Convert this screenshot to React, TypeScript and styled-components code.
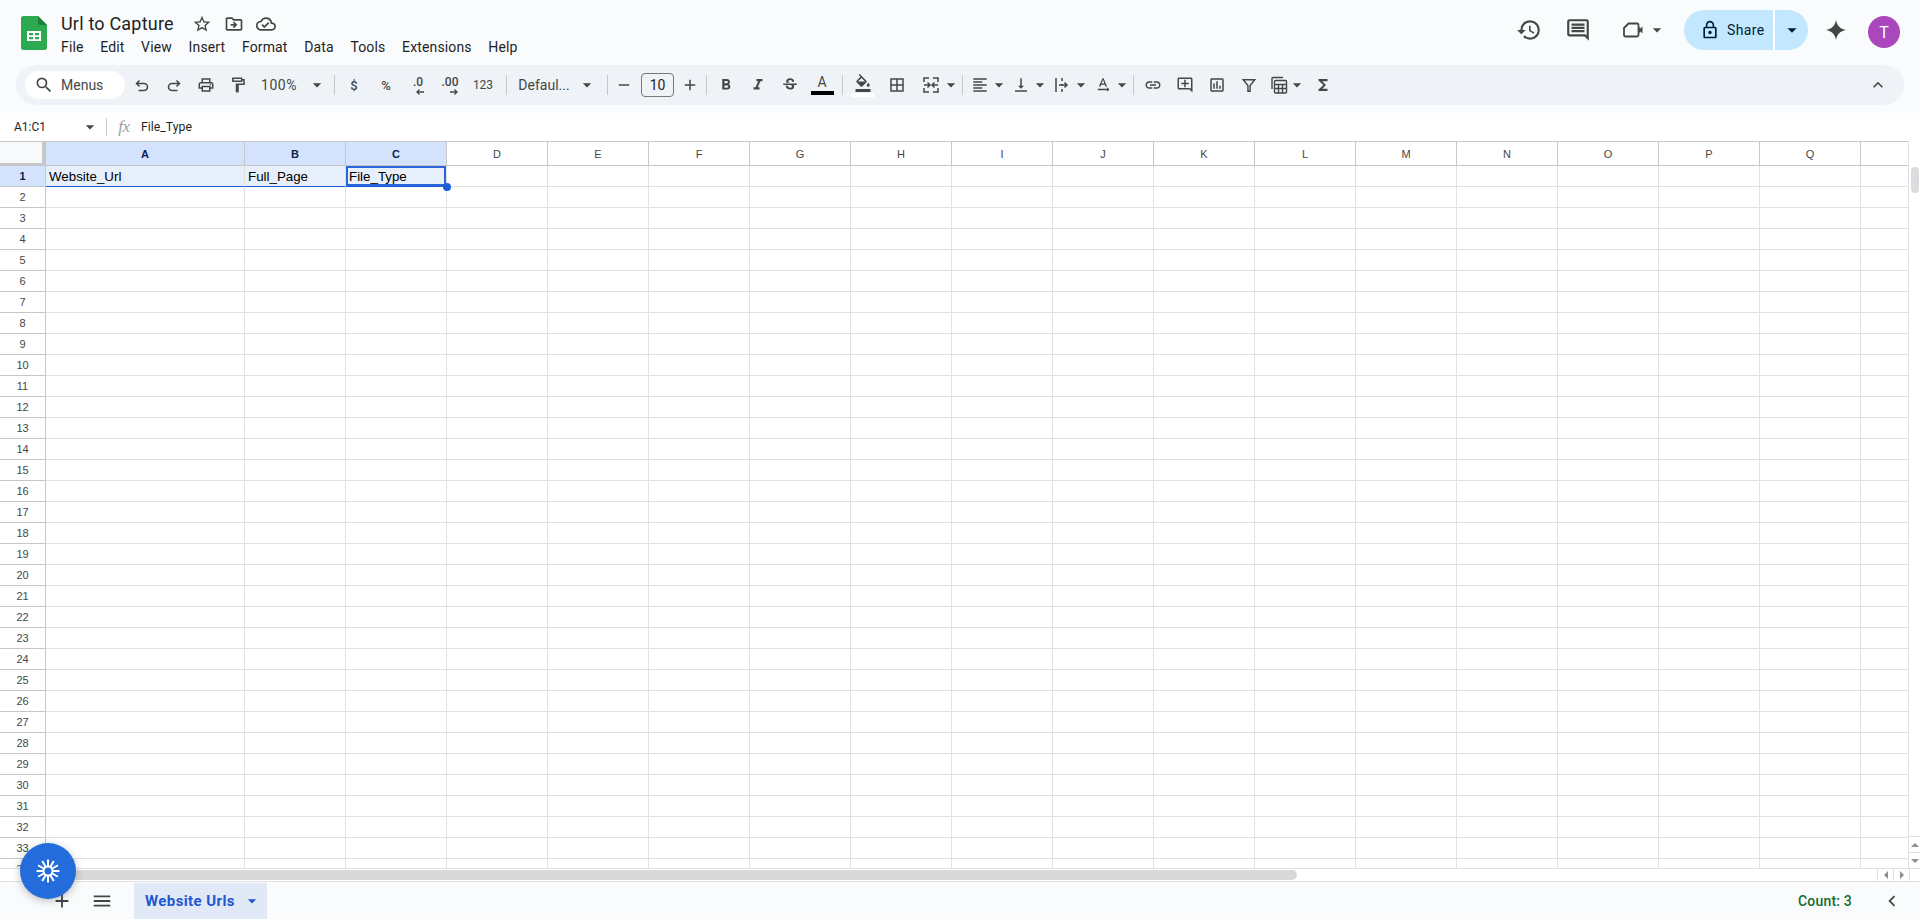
import React from "react"
import styled, { createGlobalStyle } from "styled-components"
import {
  MdAdd,
  MdArrowDropDown,
  MdChevronLeft,
  MdFormatBold,
  MdFormatItalic,
  MdFormatAlignLeft,
  MdFunctions,
  MdHistory,
  MdKeyboardArrowUp,
  MdLink,
  MdLockOutline,
  MdMenu,
  MdOutlineAddComment,
  MdOutlineBorderAll,
  MdOutlineCloudDone,
  MdOutlineComment,
  MdOutlineDriveFileMove,
  MdOutlineFormatColorFill,
  MdOutlineFormatPaint,
  MdOutlineInsertChart,
  MdOutlinePrint,
  MdRemove,
  MdSearch,
  MdStarBorder,
  MdStrikethroughS,
  MdTextRotationNone,
  MdVerticalAlignBottom,
} from "react-icons/md"

const GlobalStyle = createGlobalStyle`
  html, body {
    margin: 0;
    height: 100%;
    overflow: hidden;
    background: #fff;
    font-family: Roboto, "Liberation Sans", sans-serif;
  }
  * { box-sizing: border-box; }
`

const Page = styled.div`
  position: relative;
  display: flex;
  flex-direction: column;
  height: 919px;
  overflow: hidden;
`

const Header = styled.header`
  height: 113px;
  background: #f9fbfd;
  display: flex;
  flex-direction: column;
  flex: none;
`

const TopRow = styled.div`
  height: 65px;
  display: flex;
  padding-left: 21px;
`

const Logo = styled.svg`
  width: 26px;
  height: 34px;
  margin-top: 16px;
  flex: none;
`

const TitleBlock = styled.div`
  margin-left: 6px;
  padding-top: 11px;
  flex: 1;
`

const TitleRow = styled.div`
  display: flex;
  align-items: center;
  height: 24px;
  padding-left: 8px;
`

const Title = styled.div`
  font-size: 18px;
  letter-spacing: 0.2px;
  color: #1f1f1f;
  width: 125px;
  white-space: nowrap;
`

const TitleIcon = styled.span`
  width: 32px;
  display: flex;
  justify-content: center;
  color: #444746;
  font-size: 20px;
  padding-top: 2px;
`

const MenuRow = styled.nav`
  display: flex;
  margin-top: 1px;
  height: 22px;
  align-items: center;
`

const MenuItem = styled.span`
  padding: 0 8.6px 0 8px;
  font-size: 14px;
  color: #1f1f1f;
  letter-spacing: 0.15px;
`

const RightGroup = styled.div`
  display: flex;
  align-items: center;
  height: 40px;
  margin-top: 10px;
  padding-right: 20px;
  color: #444746;
`

const HeadIcon = styled.span<{ $w: number; $ml?: number; $size?: number }>`
  width: ${(p) => p.$w}px;
  margin-left: ${(p) => p.$ml ?? 0}px;
  display: flex;
  align-items: center;
  justify-content: center;
  font-size: ${(p) => p.$size ?? 24}px;
`

const Caret = styled(MdArrowDropDown)`
  font-size: 20px;
  flex: none;
`

const ShareButton = styled.div`
  display: flex;
  height: 40px;
  margin-left: 17px;
  border-radius: 20px;
  background: #c2e7ff;
  color: #001d35;
  overflow: hidden;
`

const ShareMain = styled.div`
  width: 91px;
  display: flex;
  align-items: center;
  padding-left: 16px;
  gap: 7px;
  font-size: 14px;
  font-weight: 400;
  letter-spacing: 0.4px;
  border-right: 2px solid #fff;
  svg { font-size: 20px; }
`

const ShareCaret = styled.div`
  width: 33px;
  display: flex;
  align-items: center;
  justify-content: center;
  svg { font-size: 22px; }
`

const Avatar = styled.div`
  width: 32px;
  height: 32px;
  border-radius: 50%;
  background: #ab47bc;
  color: #fff;
  font-size: 16px;
  margin-left: 4px;
  margin-top: 4px;
  display: flex;
  align-items: center;
  justify-content: center;
`

const Toolbar = styled.div`
  height: 40px;
  margin: 0 16px;
  padding-left: 9px;
  border-radius: 20px;
  background: #eff3f8;
  display: flex;
  align-items: center;
  color: #444746;
`

const SearchPill = styled.div`
  width: 100px;
  height: 28px;
  border-radius: 14px;
  background: #fff;
  display: flex;
  align-items: center;
  padding-left: 9px;
  gap: 7px;
  font-size: 14px;
  color: #444746;
  margin-right: 1px;
  svg { font-size: 20px; }
`

const ToolButton = styled.span<{ $w?: number; $size?: number }>`
  width: ${(p) => p.$w ?? 32}px;
  height: 28px;
  flex: none;
  display: flex;
  align-items: center;
  justify-content: center;
  position: relative;
  font-size: ${(p) => p.$size ?? 18}px;
  color: #444746;
`

const CaretButton = styled(ToolButton)`
  padding-right: 4px;
`

const ToolText = styled.span<{ $size?: number; $bold?: boolean; $track?: number }>`
  font-size: ${(p) => p.$size ?? 14}px;
  font-weight: ${(p) => (p.$bold ? 500 : 400)};
  letter-spacing: ${(p) => p.$track ?? 0}px;
  white-space: nowrap;
`

const ToolSep = styled.span<{ $ml?: number; $mr?: number }>`
  width: 1px;
  height: 20px;
  flex: none;
  background: #c7c7c7;
  margin-left: ${(p) => p.$ml ?? 0}px;
  margin-right: ${(p) => p.$mr ?? 0}px;
`

const SizeInput = styled.span`
  width: 33px;
  height: 24px;
  border: 1px solid #747775;
  border-radius: 4px;
  flex: none;
  display: flex;
  align-items: center;
  justify-content: center;
  font-size: 14px;
  color: #1f1f1f;
  margin: 0 4px 0 5px;
`

const ColorStack = styled.span`
  display: flex;
  flex-direction: column;
  align-items: center;
  width: 23px;
`

const ColorBar = styled.span<{ $color: string }>`
  width: 23px;
  height: 4px;
  background: ${(p) => p.$color};
  margin-top: 1px;
`

const LetterA = styled.span`
  font-size: 14px;
  line-height: 15px;
  color: #444746;
`

const DecimalLabel = styled.span`
  font-size: 12px;
  font-weight: 500;
  margin-top: -7px;
`

const DecimalArrow = styled.svg<{ $right?: boolean }>`
  position: absolute;
  width: 10px;
  height: 8px;
  bottom: 3px;
  left: ${(p) => (p.$right ? 15 : 13)}px;
`

const CollapseButton = styled.span`
  margin-left: auto;
  margin-right: 16px;
  font-size: 20px;
  display: flex;
  color: #444746;
`

const FormulaBar = styled.div`
  height: 28px;
  flex: none;
  background: #fff;
  display: flex;
  align-items: center;
  color: #1f1f1f;
`

const NameBox = styled.div`
  width: 106px;
  padding-left: 14px;
  display: flex;
  align-items: center;
  justify-content: space-between;
  padding-right: 6px;
  font-size: 12px;
  color: #1f1f1f;
  svg { font-size: 20px; color: #444746; }
`

const FormulaSep = styled.span`
  width: 1px;
  height: 18px;
  background: #c7c7c7;
`

const Fx = styled.span`
  font-family: "Liberation Serif", serif;
  font-style: italic;
  font-size: 17px;
  color: #9aa0a6;
  width: 34px;
  text-align: center;
  letter-spacing: -0.5px;
`

const FormulaText = styled.span`
  font-size: 12.3px;
  color: #1f1f1f;
`

const SheetArea = styled.div`
  flex: 1;
  min-height: 0;
  display: flex;
`

const GridClip = styled.div`
  flex: 1;
  overflow: hidden;
  border-bottom: 1px solid #e1e1e1;
  position: relative;
`

const Grid = styled.div`
  display: grid;
  grid-template-columns: 46px 199px repeat(16, 101px) 60px;
  grid-template-rows: 25px;
  grid-auto-rows: 21px;
  font-family: "Liberation Sans", Arial, sans-serif;
`

const Corner = styled.div`
  background: #f8f9fa;
  border-top: 1px solid #c7c7c7;
  border-right: 4px solid #c7c7c7;
  border-bottom: 3px solid #c7c7c7;
`

const ColHead = styled.div<{ $active?: boolean }>`
  border-top: 1px solid #c7c7c7;
  border-right: 1px solid #c7c7c7;
  border-bottom: 1px solid #c7c7c7;
  background: ${(p) => (p.$active ? "#d3e3fd" : "#fff")};
  color: ${(p) => (p.$active ? "#0b1f4e" : "#444746")};
  font-size: 11px;
  font-weight: ${(p) => (p.$active ? 700 : 400)};
  display: flex;
  align-items: center;
  justify-content: center;
`

const RowHead = styled.div<{ $active?: boolean }>`
  border-right: 1px solid #c7c7c7;
  border-bottom: 1px solid #c7c7c7;
  background: ${(p) => (p.$active ? "#d3e3fd" : "#fff")};
  color: ${(p) => (p.$active ? "#0b1f4e" : "#444746")};
  font-size: 11px;
  font-weight: ${(p) => (p.$active ? 700 : 400)};
  display: flex;
  align-items: center;
  justify-content: center;
`

const Cell = styled.div<{ $selected?: boolean; $current?: boolean }>`
  position: relative;
  border-right: 1px solid #e1e1e1;
  border-bottom: 1px solid ${(p) => (p.$selected ? "#1a5fd8" : "#e1e1e1")};
  background: ${(p) => (p.$selected ? "#e7effb" : "#fff")};
  box-shadow: ${(p) => (p.$current ? "inset 0 0 0 2px #2a66d9" : "none")};
  padding: 2px 3px 0 3px;
  font-size: 13.33px;
  line-height: 17px;
  color: #000;
  white-space: nowrap;
  overflow: visible;
`

const FillHandle = styled.span`
  position: absolute;
  right: -5px;
  bottom: -5px;
  width: 8px;
  height: 8px;
  border-radius: 50%;
  background: #1a5fd8;
  z-index: 2;
`

const VScroll = styled.div`
  width: 12px;
  flex: none;
  border-left: 1px solid #e1e1e1;
  border-bottom: 1px solid #e1e1e1;
  display: flex;
  flex-direction: column;
  align-items: center;
`

const VThumb = styled.div`
  width: 8px;
  height: 26px;
  margin-top: 26px;
  border-radius: 4px;
  background: #dadce0;
`

const ScrollArrow = styled.span<{ $dir: "up" | "down" | "left" | "right" }>`
  width: 0;
  height: 0;
  border-style: solid;
  ${(p) =>
    p.$dir === "up" || p.$dir === "down"
      ? `border-width: ${p.$dir === "up" ? "0 4px 4px 4px" : "4px 4px 0 4px"};
         border-color: ${p.$dir === "up" ? "transparent transparent #8f8f8f" : "#8f8f8f transparent transparent"};`
      : `border-width: ${p.$dir === "left" ? "4px 4px 4px 0" : "4px 0 4px 4px"};
         border-color: ${p.$dir === "left" ? "transparent #8f8f8f transparent transparent" : "transparent transparent transparent #8f8f8f"};`}
`

const VArrowBox = styled.div<{ $first?: boolean }>`
  width: 100%;
  height: 16px;
  display: flex;
  align-items: center;
  justify-content: center;
  border-top: 1px solid #e1e1e1;
  margin-top: ${(p) => (p.$first ? "auto" : "0")};
`

const HScroll = styled.div`
  height: 13px;
  flex: none;
  display: flex;
  align-items: center;
  padding-left: 46px;
  border-bottom: 1px solid #e1e1e1;
`

const HThumb = styled.div`
  width: 1251px;
  height: 10px;
  border-radius: 5px;
  background: #d9d9d9;
`

const HArrowBox = styled.div<{ $first?: boolean }>`
  width: 16px;
  height: 100%;
  display: flex;
  align-items: center;
  justify-content: center;
  border-left: 1px solid #e1e1e1;
  margin-left: ${(p) => (p.$first ? "auto" : "0")};
`

const HEnd = styled.div`
  width: 11px;
  height: 100%;
  border-left: 1px solid #e1e1e1;
`

const BottomBar = styled.footer`
  height: 37px;
  flex: none;
  background: #f9fbfd;
  display: flex;
  align-items: center;
  padding-left: 46px;
  color: #444746;
`

const BottomIcon = styled.span`
  width: 32px;
  margin-right: 8px;
  display: flex;
  justify-content: center;
  font-size: 22px;
`

const SheetTab = styled.div`
  height: 36px;
  width: 133px;
  margin-top: 1px;
  margin-left: 8px;
  background: #e1e9f7;
  display: flex;
  align-items: center;
  padding-left: 11px;
  font-size: 15px;
  font-weight: 700;
  letter-spacing: 0.4px;
  color: #1f57d3;
  gap: 7px;
  white-space: nowrap;
  svg { font-size: 20px; }
`

const CountLabel = styled.div`
  margin-left: auto;
  font-size: 14px;
  font-weight: 500;
  letter-spacing: 0.2px;
  color: #146c2e;
  margin-right: 29px;
`

const CollapseSide = styled.span`
  font-size: 22px;
  display: flex;
  margin-right: 17px;
`

// floats over the sheet in the lower left corner
const FloatingButton = styled.div`
  position: absolute;
  left: 20px;
  top: 843px;
  width: 56px;
  height: 56px;
  border-radius: 50%;
  background: #246bdc;
  box-shadow: 0 2px 8px rgba(0, 0, 0, 0.25);
  display: flex;
  align-items: center;
  justify-content: center;
  z-index: 5;
`

const columns = "ABCDEFGHIJKLMNOPQ".split("")
const firstRow = ["Website_Url", "Full_Page", "File_Type"]
const rows = Array.from({ length: 34 }, (_, i) => i + 1)

const SheetsLogo = () => (
  <Logo viewBox="0 0 26 34">
    <path d="M2.5 0H17l9 9v22.5a2.5 2.5 0 0 1-2.5 2.5h-21A2.5 2.5 0 0 1 0 31.5v-29A2.5 2.5 0 0 1 2.5 0z" fill="#2da94f" />
    <path d="M17 0l9 9h-6.500A2.500 2.500 0 0 1 17 6.500z" fill="#1e7e3a" />
    <path d="M6 15h14v10H6z" fill="#fff" />
    <path d="M8 17h4v2.300H8zM14 17h4v2.300h-4zM8 21h4v2.300H8zM14 21h4v2.300h-4z" fill="#2da94f" />
  </Logo>
)

const Spark = () => (
  <svg width="24" height="24" viewBox="0 0 24 24" fill="#444746">
    <path d="M12 2c.9 5.600 4.400 9.100 10 10-5.600.9-9.100 4.400-10 10-.9-5.600-4.400-9.100-10-10 5.600-.9 9.100-4.400 10-10z" />
  </svg>
)

const VideoIcon = () => (
  <svg width="24" height="24" viewBox="0 0 24 24" fill="none" stroke="#444746" strokeWidth="1.800">
    <path d="M7.500 5.500H16A1.500 1.500 0 0 1 17.500 7v10a1.500 1.500 0 0 1-1.500 1.500H4.500A1.500 1.500 0 0 1 3 17V10z" strokeLinejoin="round" />
    <path d="M18 12l3.500-3.500v7z" fill="#444746" stroke="none" />
    <path d="M18.500 9.500v5" />
  </svg>
)

const UndoIcon = () => (
  <svg width="18" height="18" viewBox="0 0 18 18" fill="none" stroke="#444746" strokeWidth="1.500">
    <path d="M3.500 7.500H11a3.500 3.500 0 0 1 0 7H5.500M6.500 4.500l-3 3 3 3" />
  </svg>
)

const RedoIcon = () => (
  <svg width="18" height="18" viewBox="0 0 18 18" fill="none" stroke="#444746" strokeWidth="1.500">
    <path d="M14.500 7.500H7a3.500 3.500 0 0 0 0 7h5.500M11.500 4.500l3 3-3 3" />
  </svg>
)

const MergeIcon = () => (
  <svg width="18" height="18" viewBox="0 0 18 18" fill="none" stroke="#444746" strokeWidth="1.500">
    <path d="M7 2H2v4M11 2h5v4M7 16H2v-4M11 16h5v-4M2 9h5M16 9h-5M5.500 6.500 8 9l-2.500 2.500M12.500 6.500 10 9l2.500 2.500" />
  </svg>
)

const WrapIcon = () => (
  <svg width="18" height="18" viewBox="0 0 18 18" fill="none" stroke="#444746" strokeWidth="1.500">
    <path d="M3 2v14M9 2v3M9 8v2M9 13v3M6 9h8M11.500 6.500 14 9l-2.500 2.500" />
  </svg>
)

const FilterIcon = () => (
  <svg width="16" height="16" viewBox="0 0 18 18" fill="none" stroke="#444746" strokeWidth="1.600">
    <path d="M2.500 3h13L10.200 9.500V16H7.800V9.500z" />
  </svg>
)

const TableMenuIcon = () => (
  <svg width="20" height="20" viewBox="0 0 20 20" fill="none" stroke="#444746" strokeWidth="1.400">
    <path d="M3 14V3.500A1 1 0 0 1 4 2.500h10" />
    <rect x="5.500" y="5.500" width="12" height="12.500" rx="1" />
    <path d="M5.500 9.500h12M9.500 9.500V18M13.500 9.500V18M5.500 13.500h12" />
  </svg>
)

const Decimal = ({ label, right }: { label: string; right?: boolean }) => (
  <ToolButton>
    <DecimalLabel>{label}</DecimalLabel>
    <DecimalArrow $right={right} viewBox="0 0 10 8" fill="none" stroke="#444746" strokeWidth="1.300">
      {right ? <path d="M1 4h7M5.500 1.500 8 4 5.500 6.500" /> : <path d="M9 4H2M4.500 1.500 2 4l2.500 2.500" />}
    </DecimalArrow>
  </ToolButton>
)

const Burst = () => (
  <svg width="26" height="26" viewBox="0 0 26 26" fill="none" stroke="#fff" strokeWidth="2">
    <circle cx="13" cy="13" r="4.500" />
    {[0, 30, 60, 90, 120, 150, 180, 210, 240, 270, 300, 330].map((a) => (
      <line key={a} x1="13" y1="8.500" x2="13" y2="1.500" transform={`rotate(${a} 13 13)`} />
    ))}
  </svg>
)

const App: React.FC = () => {
  return (
    <Page>
      <GlobalStyle />
      <Header>
        <TopRow>
          <SheetsLogo />
          <TitleBlock>
            <TitleRow>
              <Title>Url to Capture</Title>
              <TitleIcon><MdStarBorder /></TitleIcon>
              <TitleIcon><MdOutlineDriveFileMove /></TitleIcon>
              <TitleIcon><MdOutlineCloudDone /></TitleIcon>
            </TitleRow>
            <MenuRow>
              {["File", "Edit", "View", "Insert", "Format", "Data", "Tools", "Extensions", "Help"].map((m) => (
                <MenuItem key={m}>{m}</MenuItem>
              ))}
            </MenuRow>
          </TitleBlock>
          <RightGroup>
            <HeadIcon $w={50} $size={26}><MdHistory /></HeadIcon>
            <HeadIcon $w={48} $size={26}><MdOutlineComment /></HeadIcon>
            <HeadIcon $w={28} $ml={17}><VideoIcon /></HeadIcon>
            <Caret />
            <ShareButton>
              <ShareMain>
                <MdLockOutline />
                Share
              </ShareMain>
              <ShareCaret><MdArrowDropDown /></ShareCaret>
            </ShareButton>
            <HeadIcon $w={56}><Spark /></HeadIcon>
            <Avatar>T</Avatar>
          </RightGroup>
        </TopRow>
        <Toolbar>
          <SearchPill>
            <MdSearch />
            Menus
          </SearchPill>
          <ToolButton><UndoIcon /></ToolButton>
          <ToolButton><RedoIcon /></ToolButton>
          <ToolButton><MdOutlinePrint /></ToolButton>
          <ToolButton><MdOutlineFormatPaint /></ToolButton>
          <ToolButton $w={50}><ToolText $track={0.5}>100%</ToolText></ToolButton>
          <ToolButton $w={26}><Caret /></ToolButton>
          <ToolSep $ml={4} $mr={3} />
          <ToolButton><ToolText $size={13} $bold>$</ToolText></ToolButton>
          <ToolButton><ToolText $size={13} $bold>%</ToolText></ToolButton>
          <Decimal label=".0" />
          <Decimal label=".00" right />
          <ToolButton $w={34}><ToolText $size={12}>123</ToolText></ToolButton>
          <ToolSep $ml={6} $mr={7} />
          <ToolButton $w={60}><ToolText>Defaul...</ToolText></ToolButton>
          <ToolButton $w={26}><Caret /></ToolButton>
          <ToolSep $ml={7} $mr={4} />
          <ToolButton $w={24}><MdRemove /></ToolButton>
          <SizeInput>10</SizeInput>
          <ToolButton $w={24}><MdAdd /></ToolButton>
          <ToolSep $ml={4} $mr={3} />
          <ToolButton><MdFormatBold /></ToolButton>
          <ToolButton><MdFormatItalic /></ToolButton>
          <ToolButton><MdStrikethroughS /></ToolButton>
          <ToolButton>
            <ColorStack>
              <LetterA>A</LetterA>
              <ColorBar $color="#000" />
            </ColorStack>
          </ToolButton>
          <ToolSep $ml={4} $mr={4} />
          <ToolButton>
            <ColorStack>
              <MdOutlineFormatColorFill />
              <ColorBar $color="#fff" />
            </ColorStack>
          </ToolButton>
          <ToolButton $w={36}><MdOutlineBorderAll /></ToolButton>
          <ToolButton $w={32}><MergeIcon /></ToolButton>
          <CaretButton $w={12}><Caret /></CaretButton>
          <ToolSep $ml={3} $mr={3} />
          <ToolButton $w={28}><MdFormatAlignLeft /></ToolButton>
          <CaretButton $w={13}><Caret /></CaretButton>
          <ToolButton $w={28}><MdVerticalAlignBottom /></ToolButton>
          <CaretButton $w={13}><Caret /></CaretButton>
          <ToolButton $w={28}><WrapIcon /></ToolButton>
          <CaretButton $w={13}><Caret /></CaretButton>
          <ToolButton $w={28}><MdTextRotationNone /></ToolButton>
          <CaretButton $w={13}><Caret /></CaretButton>
          <ToolSep $ml={3} $mr={3} />
          <ToolButton><MdLink /></ToolButton>
          <ToolButton><MdOutlineAddComment /></ToolButton>
          <ToolButton><MdOutlineInsertChart /></ToolButton>
          <ToolButton><FilterIcon /></ToolButton>
          <ToolButton $w={28}><TableMenuIcon /></ToolButton>
          <CaretButton $w={12}><Caret /></CaretButton>
          <ToolButton $w={36}><MdFunctions /></ToolButton>
          <CollapseButton><MdKeyboardArrowUp /></CollapseButton>
        </Toolbar>
      </Header>

      <FormulaBar>
        <NameBox>
          A1:C1
          <MdArrowDropDown />
        </NameBox>
        <FormulaSep />
        <Fx>fx</Fx>
        <FormulaText>File_Type</FormulaText>
      </FormulaBar>

      <SheetArea>
        <GridClip>
          <Grid>
            <Corner />
            {columns.map((c, i) => (
              <ColHead key={c} $active={i < 3}>{c}</ColHead>
            ))}
            <ColHead />
            {rows.map((r) => (
              <React.Fragment key={r}>
                <RowHead $active={r === 1}>{r}</RowHead>
                {columns.map((c, i) => {
                  const selected = r === 1 && i < 3
                  const current = r === 1 && i === 2
                  return (
                    <Cell key={c} $selected={selected} $current={current}>
                      {r === 1 ? firstRow[i] : null}
                      {current && <FillHandle />}
                    </Cell>
                  )
                })}
                <Cell />
              </React.Fragment>
            ))}
          </Grid>
        </GridClip>
        <VScroll>
          <VThumb />
          <VArrowBox $first><ScrollArrow $dir="up" /></VArrowBox>
          <VArrowBox><ScrollArrow $dir="down" /></VArrowBox>
        </VScroll>
      </SheetArea>

      <HScroll>
        <HThumb />
        <HArrowBox $first><ScrollArrow $dir="left" /></HArrowBox>
        <HArrowBox><ScrollArrow $dir="right" /></HArrowBox>
        <HEnd />
      </HScroll>

      <BottomBar>
        <BottomIcon><MdAdd /></BottomIcon>
        <BottomIcon><MdMenu /></BottomIcon>
        <SheetTab>
          Website Urls
          <MdArrowDropDown />
        </SheetTab>
        <CountLabel>Count: 3</CountLabel>
        <CollapseSide><MdChevronLeft /></CollapseSide>
      </BottomBar>

      <FloatingButton><Burst /></FloatingButton>
    </Page>
  )
}

export default App
